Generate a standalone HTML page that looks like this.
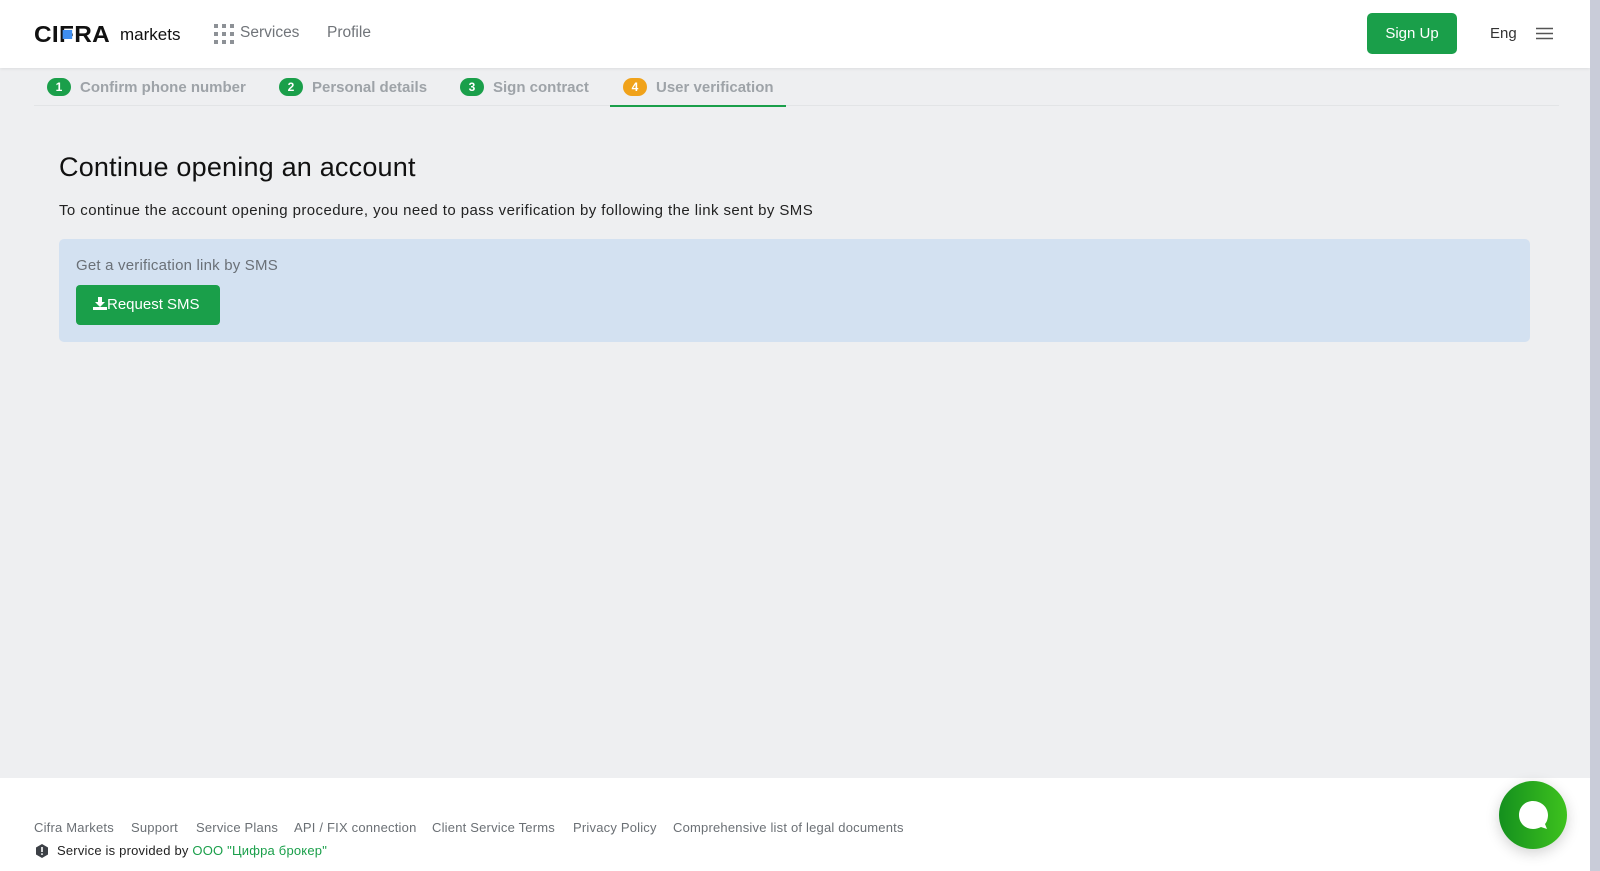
<!DOCTYPE html>
<html><head><meta charset="utf-8"><style>
*{margin:0;padding:0;box-sizing:border-box}
body{width:1600px;height:871px;overflow:hidden;background:#eeeff1;font-family:"Liberation Sans",Arial,sans-serif;position:relative}
.a{position:absolute;white-space:nowrap}
header{position:absolute;left:0;top:0;width:1590px;height:68px;background:#fff;box-shadow:0 1px 3px rgba(0,0,0,.08)}
.sb{position:absolute;left:1590px;top:0;width:10px;height:871px;background:#c9ccd9}
.step{font-size:15px;font-weight:bold;color:#9ea3a8}
.c{display:inline-block;width:24px;height:18px;border-radius:9px;background:#1a9f4a;color:#fff;font-size:12px;text-align:center;line-height:18px;margin-right:9px;vertical-align:1px}
footer{position:absolute;left:0;top:778px;width:1590px;height:93px;background:#fff}
.fl{font-size:13px;color:#6b7075;top:42px;letter-spacing:0.2px}
</style></head><body>
<header>
<div class="a" style="left:34px;top:21px;font-size:23px;font-weight:900;color:#111;letter-spacing:0.3px;transform:scaleX(1.06);transform-origin:left">CI<span style="position:relative">F<span style="position:absolute;left:3px;top:9px;width:9px;height:9px;background:#3f8ef0"></span></span>RA</div>
<div class="a" style="left:120px;top:25px;font-size:17px;color:#111">markets</div>
<svg class="a" style="left:214px;top:24px" width="20" height="20" viewBox="0 0 20 20" fill="#8d9196"><rect x="0" y="0" width="4" height="4"/><rect x="8" y="0" width="4" height="4"/><rect x="16" y="0" width="4" height="4"/><rect x="0" y="8" width="4" height="4"/><rect x="8" y="8" width="4" height="4"/><rect x="16" y="8" width="4" height="4"/><rect x="0" y="16" width="4" height="4"/><rect x="8" y="16" width="4" height="4"/><rect x="16" y="16" width="4" height="4"/></svg>
<div class="a" style="left:240px;top:24px;font-size:15.5px;color:#707479">Services</div>
<div class="a" style="left:327px;top:24px;font-size:15.5px;color:#707479">Profile</div>
<div class="a" style="left:1367px;top:13px;width:90px;height:41px;background:#1a9f4a;border-radius:5px;color:#fff;font-size:15px;text-align:center;line-height:41px">Sign Up</div>
<div class="a" style="left:1490px;top:25px;font-size:15px;color:#333">Eng</div>
<svg class="a" style="left:1536px;top:27px" width="17" height="13" viewBox="0 0 17 13" stroke="#555" stroke-width="1.6"><path d="M0 1.5H17M0 6.5H17M0 11.5H17"/></svg>
</header>
<div class="a" style="left:34px;top:105px;width:1525px;height:1px;background:#e2e4e6"></div>
<div class="a step" style="left:47px;top:78px"><span class="c">1</span>Confirm phone number</div>
<div class="a step" style="left:279px;top:78px"><span class="c">2</span>Personal details</div>
<div class="a step" style="left:460px;top:78px"><span class="c">3</span>Sign contract</div>
<div class="a step" style="left:623px;top:78px"><span class="c" style="background:#f0a21a">4</span>User verification</div>
<div class="a" style="left:610px;top:105px;width:176px;height:2px;background:#1a9f4a"></div>
<div class="a" style="left:59px;top:152px;font-size:27px;color:#111;letter-spacing:0.2px">Continue opening an account</div>
<div class="a" style="left:59px;top:202px;font-size:15px;color:#222;letter-spacing:0.42px">To continue the account opening procedure, you need to pass verification by following the link sent by SMS</div>
<div class="a" style="left:59px;top:239px;width:1471px;height:103px;background:#d3e1f1;border-radius:5px"></div>
<div class="a" style="left:76px;top:257px;font-size:15px;color:#6a7077;letter-spacing:0.2px">Get a verification link by SMS</div>
<div class="a" style="left:76px;top:285px;width:144px;height:40px;background:#1a9f4a;border-radius:4px;color:#fff;font-size:15px;line-height:40px;padding-left:17px"><svg width="14" height="13" viewBox="0 0 14 13" fill="#fff" style="vertical-align:-1px"><path d="M5 0h4v5h3l-5 5-5-5h3z"/><rect x="0" y="10" width="14" height="3"/></svg>Request SMS</div>
<footer>
<div class="a fl" style="left:34px">Cifra Markets</div>
<div class="a fl" style="left:131px">Support</div>
<div class="a fl" style="left:196px">Service Plans</div>
<div class="a fl" style="left:294px">API / FIX connection</div>
<div class="a fl" style="left:432px">Client Service Terms</div>
<div class="a fl" style="left:573px">Privacy Policy</div>
<div class="a fl" style="left:673px">Comprehensive list of legal documents</div>
<svg class="a" style="left:35px;top:66px" width="14" height="14" viewBox="0 0 14 14"><path d="M7 0L13 3.5V10.5L7 14L1 10.5V3.5Z" fill="#3c4046"/><rect x="6.2" y="3" width="1.6" height="5" fill="#fff"/><rect x="6.2" y="9.3" width="1.6" height="1.6" fill="#fff"/></svg>
<div class="a" style="left:57px;top:65px;font-size:13px;color:#222;letter-spacing:0.2px">Service is provided by <span style="color:#1a9f4a">ООО "Цифра брокер"</span></div>
</footer>
<div class="a" style="left:1499px;top:781px;width:68px;height:68px;border-radius:50%;background:linear-gradient(90deg,#14901e,#3ec21e);box-shadow:0 4px 14px rgba(0,0,0,.18)"></div>
<svg class="a" style="left:1518px;top:800px" width="32" height="32" viewBox="0 0 32 32"><path d="M15 1C7 1 1 7 1 15s6 14 14 14c3 0 6-1 8-2l6 2-2-5c2-2 3-6 3-9C30 7 23 1 15 1z" fill="#fff"/></svg>
<div class="sb"></div>
</body></html>
